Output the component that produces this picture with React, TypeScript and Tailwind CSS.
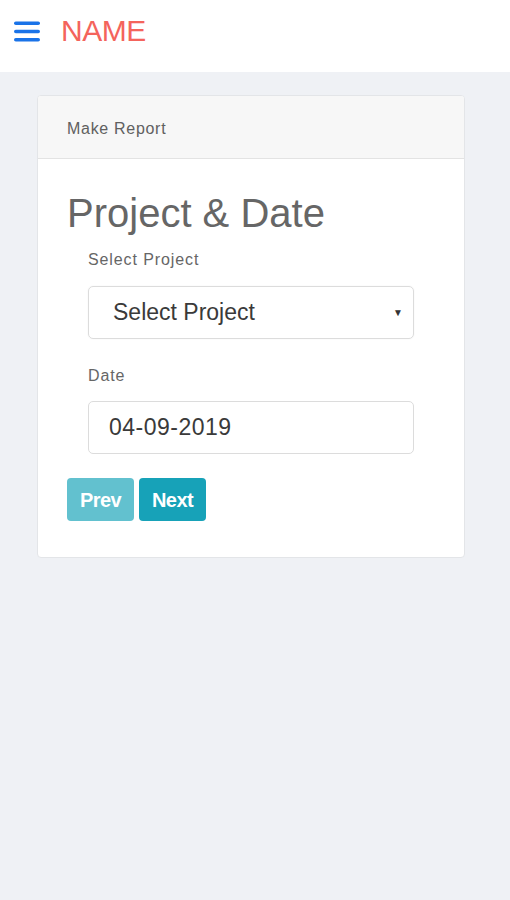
function MenuIcon() {
  return (
    <svg width="26" height="21" viewBox="0 0 26 21" className="block">
      <rect x="0" y="0.5" width="26" height="3.5" rx="1.75" fill="#1a73e8" />
      <rect x="0" y="8.75" width="26" height="3.5" rx="1.75" fill="#1a73e8" />
      <rect x="0" y="17" width="26" height="3.5" rx="1.75" fill="#1a73e8" />
    </svg>
  );
}

export default function App() {
  return (
    <div className="min-h-[900px] bg-[#eff1f5] font-['Liberation_Sans',Arial,sans-serif]">
      {/* Top bar */}
      <header className="h-[72px] bg-white flex items-center pl-[14px] pb-[10px]">
        <MenuIcon />
        <span className="ml-[21px] text-[30px] leading-none text-[#f4645c] tracking-[-0.5px]">NAME</span>
      </header>

      <div className="pt-[23px] px-[37px]">
        <div className="w-[428px] bg-white border border-[#e3e5e8] rounded-[4px] overflow-hidden">
          <div className="h-[63px] bg-[#f7f7f7] border-b border-[#e3e3e3] flex items-center pl-[29px] pt-[3px]">
            <span className="text-[16px] tracking-[0.7px] text-[#606060]">Make Report</span>
          </div>

          <div className="pt-[31px] pl-[29px] pb-[36px]">
            <h1 className="text-[40px] leading-[46px] text-[#666]">Project &amp; Date</h1>

            <div className="pl-[21px] pr-[50px]">
              <label className="block mt-[14px] text-[16px] leading-[20px] tracking-[0.9px] text-[#666]">Select Project</label>
              <div className="mt-[16px] h-[53px] border border-[#dcdcdc] rounded-[5px] flex items-center justify-between pl-[24px] pr-[10px] shadow-[0_0_2px_rgba(0,0,0,0.05)]">
                <span className="text-[23px] text-[#3a3a3a]">Select Project</span>
                <span className="text-[10px] text-[#333]">▼</span>
              </div>

              <label className="block mt-[27px] text-[16px] leading-[20px] tracking-[0.9px] text-[#666]">Date</label>
              <div className="mt-[15px] h-[53px] border border-[#dcdcdc] rounded-[5px] flex items-center pl-[20px]">
                <span className="text-[23px] text-[#3a3a3a] tracking-[0.5px]">04-09-2019</span>
              </div>
            </div>

            <div className="mt-[24px] flex gap-[5px]">
              <button className="w-[67px] h-[43px] rounded-[4px] bg-[#62c1cf] text-white font-bold text-[20px] tracking-[-0.6px]">
                Prev
              </button>
              <button className="w-[67px] h-[43px] rounded-[4px] bg-[#17a2b8] text-white font-bold text-[20px] tracking-[-0.6px]">
                Next
              </button>
            </div>
          </div>
        </div>
      </div>
    </div>
  );
}
